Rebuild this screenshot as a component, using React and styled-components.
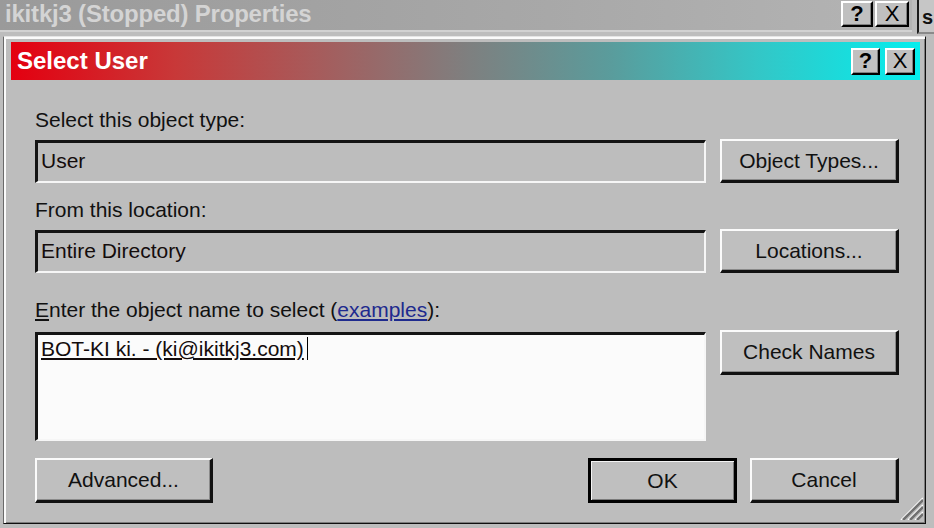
import styled, { createGlobalStyle } from "styled-components";

const GlobalStyle = createGlobalStyle`
  html, body {
    margin: 0;
    padding: 0;
  }
  body {
    width: 934px;
    height: 528px;
    overflow: hidden;
    background: #bdbdbd;
    font-family: "Liberation Sans", Arial, sans-serif;
  }
`;

const Desktop = styled.div`
  width: 934px;
  height: 528px;
  display: flex;
  flex-direction: column;
  overflow: hidden;
  background: #bdbdbd;
`;

const TopStrip = styled.div`
  display: flex;
  height: 36px;
  align-items: flex-start;
`;

const ParentTitle = styled.div`
  width: 912px;
  height: 32px;
  box-sizing: border-box;
  display: flex;
  align-items: center;
  gap: 2px;
  padding: 0 3px 2px 5px;
  background: linear-gradient(to right, #9a9a9a, #a8a8a8 60%, #b4b4b4);
  border-bottom: 2px solid #d2d2d2;
`;

const ParentTitleText = styled.div`
  flex: 1;
  color: #d4d4d4;
  font-size: 24px;
  font-weight: bold;
  letter-spacing: -0.2px;
  white-space: nowrap;
`;

const BehindWindow = styled.div`
  flex: 1;
  height: 34px;
  margin-left: 5px;
  box-sizing: border-box;
  border-left: 2px solid #1c1c1c;
  border-bottom: 2px solid #8a8a8a;
  background: #c6c6c6;
  padding: 6px 0 0 3px;
  font-size: 20px;
  font-weight: bold;
  color: #111;
  overflow: hidden;
`;

const CaptionButton = styled.div`
  width: ${(p) => p.$w}px;
  height: ${(p) => p.$h}px;
  box-sizing: border-box;
  display: flex;
  align-items: center;
  justify-content: center;
  background: #c0c0c0;
  border: 2px solid;
  border-color: #fff #000 #000 #fff;
  box-shadow: inset -1px -1px #808080;
  color: #000;
  font-size: 22px;
  font-weight: ${(p) => (p.$bold ? "bold" : "normal")};
  line-height: 1;
`;

const Dialog = styled.div`
  position: relative;
  margin-left: 3px;
  width: 923px;
  height: 488px;
  box-sizing: border-box;
  padding: 5px 5px 0 7px;
  display: flex;
  flex-direction: column;
  background: #bdbdbd;
  border: 1px solid;
  border-color: #e4e4e4 #101010 #101010 #6a6a6a;
  box-shadow: inset 2px 2px #fafafa, inset -1px -1px #7c7c7c;
`;

const Caption = styled.div`
  height: 38px;
  display: flex;
  align-items: center;
  gap: 5px;
  padding: 0 5px 0 6px;
  background: linear-gradient(
    to right,
    #e40010 0%,
    #c83838 18%,
    #a85a5a 33%,
    #7f7f7f 50%,
    #5a9c9c 66%,
    #34c6c6 82%,
    #04eeee 100%
  );
`;

const CaptionText = styled.div`
  flex: 1;
  color: #fff;
  font-size: 24px;
  font-weight: bold;
  white-space: nowrap;
`;

const Body = styled.div`
  display: flex;
  flex-direction: column;
  padding: 28px 21px 0 24px;
`;

const Label = styled.div`
  height: 24px;
  line-height: 24px;
  font-size: 21px;
  color: #111;
  white-space: nowrap;
  margin-top: ${(p) => p.$top || 0}px;
  margin-bottom: ${(p) => p.$bottom || 7}px;
`;

const Link = styled.span`
  color: #1e2a8e;
  text-decoration: underline;
`;

const Row = styled.div`
  display: flex;
  align-items: flex-start;
  gap: 14px;
`;

const Field = styled.div`
  width: 671px;
  height: ${(p) => p.$h}px;
  margin-top: ${(p) => p.$top || 0}px;
  box-sizing: border-box;
  display: flex;
  align-items: ${(p) => (p.$multi ? "flex-start" : "center")};
  padding: ${(p) => (p.$multi ? "2px 0 0 3px" : "0 0 3px 3px")};
  background: ${(p) => (p.$white ? "#fbfbfb" : "#bdbdbd")};
  border-style: solid;
  border-width: 3px 2px 2px 3px;
  border-color: #141414 #f6f6f6 #f6f6f6 #141414;
  font-size: 21px;
  line-height: 24px;
  color: #140c0c;
  white-space: nowrap;
`;

const Resolved = styled.span`
  text-decoration: underline;
`;

const Caret = styled.span`
  display: inline-block;
  width: 1px;
  height: 23px;
  margin-left: 3px;
  vertical-align: -5px;
  background: #000;
`;

const Button = styled.div`
  width: ${(p) => p.$w || 179}px;
  height: ${(p) => p.$h || 44}px;
  box-sizing: border-box;
  display: flex;
  align-items: center;
  justify-content: center;
  background: #bfbfbf;
  border-style: solid;
  border-width: ${(p) => (p.$default ? "3px" : "2px 3px 3px 2px")};
  border-color: ${(p) =>
    p.$default ? "#000" : "#fbfbfb #111 #111 #fbfbfb"};
  box-shadow: ${(p) =>
    p.$default
      ? "inset 1px 1px #f4f4f4, inset -1px -1px #7a7a7a"
      : "inset -1px -1px #8a8a8a"};
  font-size: 21px;
  color: #111;
  white-space: nowrap;
`;

const ButtonBar = styled.div`
  display: flex;
  justify-content: space-between;
  margin-top: 17px;
`;

const ButtonGroup = styled.div`
  display: flex;
  gap: 13px;
`;

const Grip = styled.svg`
  position: absolute;
  right: 2px;
  bottom: 3px;
`;

const SizeGrip = () => (
  <Grip width="26" height="24" viewBox="0 0 26 24">
    {[0, 7, 14].map((o) => (
      <g key={o}>
        <line x1={4 + o} y1="24" x2="26" y2={2 + o} stroke="#fff" strokeWidth="1.5" />
        <line x1={6 + o} y1="24" x2="26" y2={4 + o} stroke="#707070" strokeWidth="2.5" />
      </g>
    ))}
  </Grip>
);

export default function App() {
  return (
    <Desktop>
      <GlobalStyle />
      <TopStrip>
        <ParentTitle>
          <ParentTitleText>ikitkj3 (Stopped) Properties</ParentTitleText>
          <CaptionButton $w={32} $h={26} $bold>?</CaptionButton>
          <CaptionButton $w={34} $h={26}>X</CaptionButton>
        </ParentTitle>
        <BehindWindow>s</BehindWindow>
      </TopStrip>

      <Dialog>
        <Caption>
          <CaptionText>Select User</CaptionText>
          <CaptionButton $w={29} $h={27} $bold>?</CaptionButton>
          <CaptionButton $w={30} $h={27}>X</CaptionButton>
        </Caption>

        <Body>
          <Label>Select this object type:</Label>
          <Row>
            <Field $h={43} $top={1}>User</Field>
            <Button>Object Types...</Button>
          </Row>

          <Label $top={15}>From this location:</Label>
          <Row>
            <Field $h={43} $top={1}>Entire Directory</Field>
            <Button>Locations...</Button>
          </Row>

          <Label $top={25} $bottom={8}>
            <u>E</u>nter the object name to select (<Link>examples</Link>):
          </Label>
          <Row>
            <Field $h={109} $top={2} $white $multi>
              <Resolved>BOT-KI ki. - (ki@ikitkj3.com)</Resolved>
              <Caret />
            </Field>
            <Button $h={45}>Check Names</Button>
          </Row>

          <ButtonBar>
            <Button $w={178} $h={45}>Advanced...</Button>
            <ButtonGroup>
              <Button $w={149} $h={45} $default>OK</Button>
              <Button $w={149} $h={45}>Cancel</Button>
            </ButtonGroup>
          </ButtonBar>
        </Body>
        <SizeGrip />
      </Dialog>
    </Desktop>
  );
}
